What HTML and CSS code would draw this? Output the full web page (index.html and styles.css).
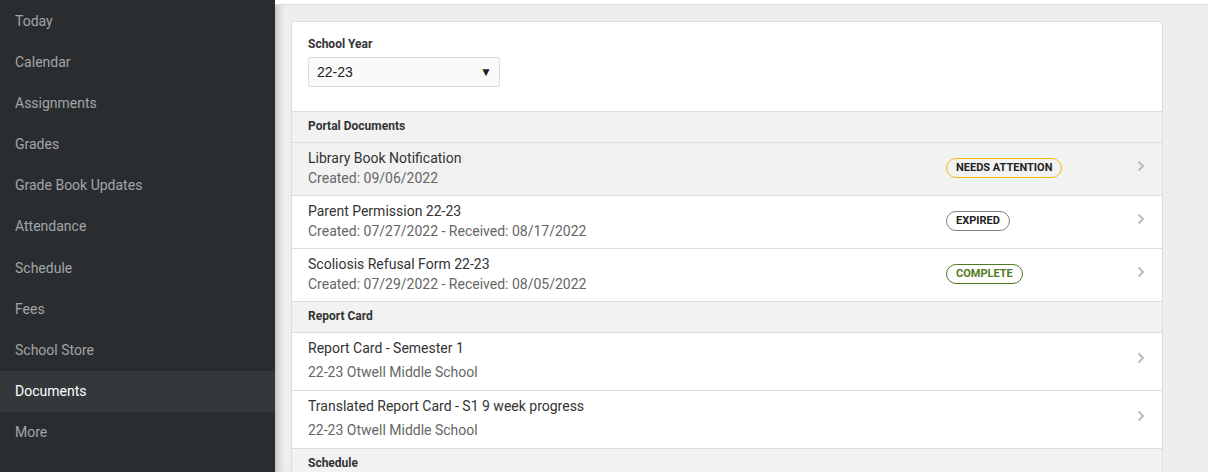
FILE: index.html
```html
<!DOCTYPE html>
<html lang="en">
<head>
  <meta charset="UTF-8" />
  <title>Documents</title>
  <link rel="stylesheet" href="styles.css">
</head>
<body>
  <nav class="sidebar">
    <a class="nav-item">Today</a>
    <a class="nav-item">Calendar</a>
    <a class="nav-item">Assignments</a>
    <a class="nav-item">Grades</a>
    <a class="nav-item">Grade Book Updates</a>
    <a class="nav-item">Attendance</a>
    <a class="nav-item">Schedule</a>
    <a class="nav-item">Fees</a>
    <a class="nav-item">School Store</a>
    <a class="nav-item active">Documents</a>
    <a class="nav-item">More</a>
  </nav>

  <main class="main">
    <div class="topbar"></div>
    <div class="card">
      <div class="filters">
        <label class="field-label">School Year</label>
        <div class="select">
          <span>22-23</span>
          <span class="caret">&#9660;</span>
        </div>
      </div>

      <div class="section-header">Portal Documents</div>
      <div class="row hover">
        <div class="row-text">
          <div class="row-title">Library Book Notification</div>
          <div class="row-sub">Created: 09/06/2022</div>
        </div>
        <div><span class="badge attention">Needs Attention</span></div>
        <svg class="chevron" width="8" height="12" viewBox="0 0 8 12"><polyline points="1.5,1.5 6,6 1.5,10.5" /></svg>
      </div>
      <div class="row">
        <div class="row-text">
          <div class="row-title">Parent Permission 22-23</div>
          <div class="row-sub">Created: 07/27/2022 - Received: 08/17/2022</div>
        </div>
        <div><span class="badge expired">Expired</span></div>
        <svg class="chevron" width="8" height="12" viewBox="0 0 8 12"><polyline points="1.5,1.5 6,6 1.5,10.5" /></svg>
      </div>
      <div class="row">
        <div class="row-text">
          <div class="row-title">Scoliosis Refusal Form 22-23</div>
          <div class="row-sub">Created: 07/29/2022 - Received: 08/05/2022</div>
        </div>
        <div><span class="badge complete">Complete</span></div>
        <svg class="chevron" width="8" height="12" viewBox="0 0 8 12"><polyline points="1.5,1.5 6,6 1.5,10.5" /></svg>
      </div>

      <div class="section-header">Report Card</div>
      <div class="row tall">
        <div class="row-text">
          <div class="row-title">Report Card - Semester 1</div>
          <div class="row-sub">22-23 Otwell Middle School</div>
        </div>
        <div></div>
        <svg class="chevron" width="8" height="12" viewBox="0 0 8 12"><polyline points="1.5,1.5 6,6 1.5,10.5" /></svg>
      </div>
      <div class="row tall">
        <div class="row-text">
          <div class="row-title">Translated Report Card - S1 9 week progress</div>
          <div class="row-sub">22-23 Otwell Middle School</div>
        </div>
        <div></div>
        <svg class="chevron" width="8" height="12" viewBox="0 0 8 12"><polyline points="1.5,1.5 6,6 1.5,10.5" /></svg>
      </div>

      <div class="section-header">Schedule</div>
    </div>
  </main>
</body>
</html>
```

FILE: styles.css
```css
html, body {
  margin: 0;
  height: 100%;
  overflow: hidden;
}
body {
  display: flex;
  font-family: Roboto, "Liberation Sans", sans-serif;
  font-size: 14px;
  color: #333;
  background-color: #eeeeee;
}
.sidebar {
  width: 275px;
  flex-shrink: 0;
  background-color: #2a2d30;
  padding-top: 1px;
}
.nav-item {
  display: block;
  height: 41.1px;
  line-height: 41px;
  padding-left: 15px;
  color: #a3a5a7;
  font-size: 14px;
}
.nav-item.active {
  background-color: #33383b;
  color: #ffffff;
}
.main {
  flex: 1;
  box-shadow: inset 10px 0 8px -8px rgba(0, 0, 0, 0.25);
}
.topbar {
  height: 4px;
  background: #ffffff;
  border-bottom: 1px solid #dddddd;
}
.card {
  width: 870px;
  margin: 16px 0 0 16px;
  background: #ffffff;
  border: 1px solid #dddddd;
  border-radius: 3px;
}
.filters {
  padding: 15px 16px 24px;
}
.field-label {
  display: block;
  font-size: 12px;
  font-weight: bold;
  color: #333;
  margin-bottom: 6px;
}
.select {
  height: 28px;
  border: 1px solid #dddddd;
  border-radius: 3px;
  background: #fafafa;
  display: flex;
  align-items: center;
  justify-content: space-between;
  padding: 0 7px 0 8px;
  width: 175px;
  font-family: "Liberation Sans", Arial, sans-serif;
  font-size: 14px;
  color: #222;
}
.caret {
  font-size: 12px;
  color: #222;
}
.section-header {
  background: #f2f2f2;
  border-top: 1px solid #dddddd;
  border-bottom: 1px solid #dddddd;
  height: 30px;
  line-height: 29px;
  padding-left: 16px;
  font-size: 12px;
  font-weight: bold;
  color: #333;
}
.section-header + .row {
  border-top: none;
}
.row {
  display: grid;
  grid-template-columns: 1fr 191px 8px;
  align-items: center;
  padding: 5px 17px 7px 16px;
  border-top: 1px solid #dddddd;
}
.row.hover {
  background: #f2f2f2;
}
.row-title {
  line-height: 20px;
  color: #333;
}
.row-sub {
  line-height: 20px;
  color: #666;
}
.row.tall {
  padding-top: 3px;
  padding-bottom: 6px;
}
.row.tall .row-title,
.row.tall .row-sub {
  line-height: 24px;
}
.chevron {
  fill: none;
  stroke: #bbbbbb;
  stroke-width: 2;
  margin-bottom: 4px;
}
.badge {
  display: inline-block;
  font-size: 11px;
  font-weight: bold;
  text-transform: uppercase;
  line-height: 18px;
  padding: 0 9px;
  border: 1px solid;
  border-radius: 10px;
  color: #222;
}
.badge.attention {
  border-color: #f5b400;
}
.badge.expired {
  border-color: #808080;
}
.badge.complete {
  border-color: #4f7a21;
  color: #4f7a21;
}
```
